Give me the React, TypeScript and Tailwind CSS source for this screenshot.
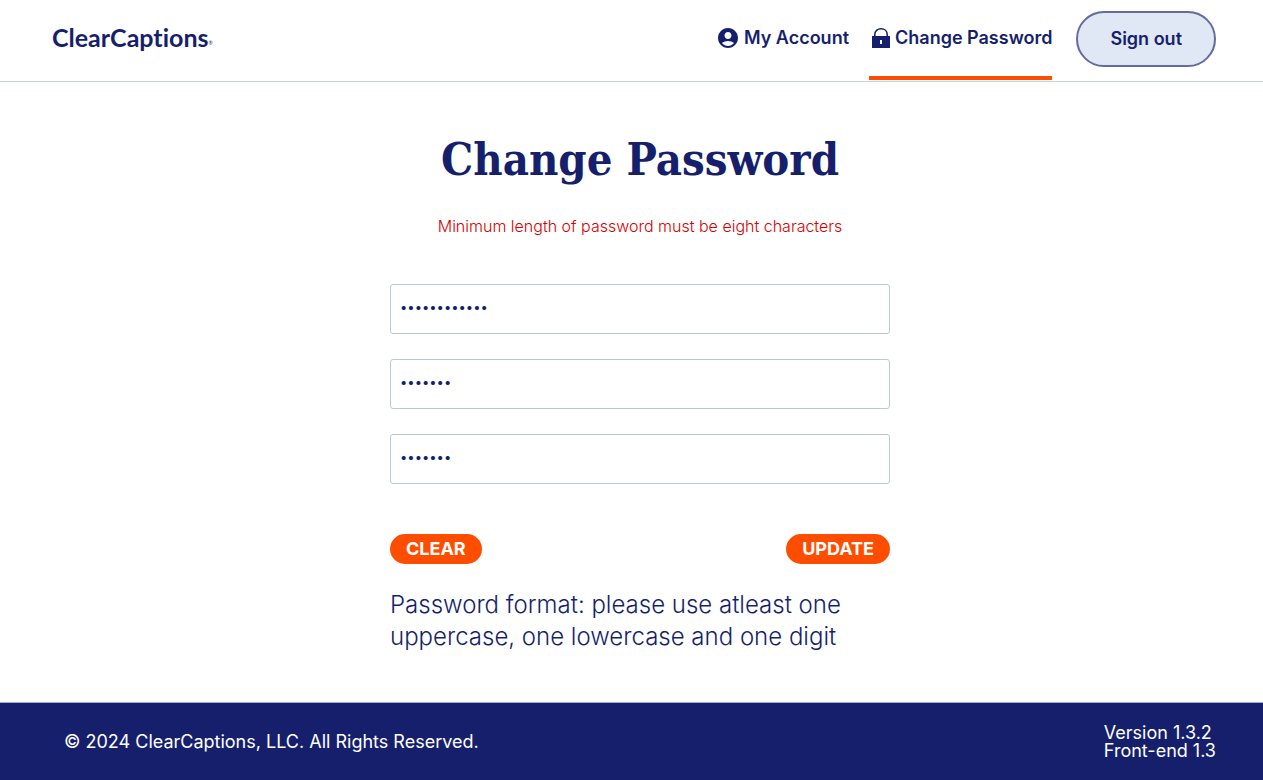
import { useState } from "react";
import { MdAccountCircle } from "react-icons/md";

function LockIcon() {
  return (
    <svg viewBox="0 0 18 20" className="h-5 w-[18px]" fill="none" aria-hidden="true">
      <path d="M2.8 9V6.5C2.8 3 5.5 .8 9 .8s6.200 2.200 6.200 5.700V9" stroke="currentColor" strokeWidth="1.500" />
      <path fill="currentColor" fillRule="evenodd" d="M0 8h18v12H0zM8 12v4h2v-4z" />
    </svg>
  );
}

function PasswordField({ label, initial }: { label: string; initial: string }) {
  const [value, setValue] = useState(initial);
  return (
    <input
      type="password"
      aria-label={label}
      value={value}
      onChange={(e) => setValue(e.target.value)}
      className="h-[50px] w-full rounded-[3px] border border-[#b9c6e6] bg-white px-[9px] pb-1 text-[13px] text-[#161f6c] outline-none"
    />
  );
}

const pill =
  "h-[30px] cursor-pointer rounded-full bg-[#ff4d00] px-4 text-lg leading-[30px] font-bold text-white";

export default function App() {
  return (
    <div className="flex min-h-screen flex-col bg-white font-['Inter','Liberation_Sans',sans-serif] text-[#161f6c]">
      <header className="flex h-[82px] items-start justify-between border-b border-[#c9d3ea] pr-[47px] pl-[52px]">
        <a href="#home" className="flex h-[76px] items-center font-['Lato',sans-serif] text-[25px] font-bold [font-variant-ligatures:none]">
          ClearCaptions<span className="pt-3 text-[5px] font-normal">®</span>
        </a>
        <div className="flex">
          <nav className="flex gap-5 text-lg font-semibold">
            <a href="#account" className="flex h-20 items-center gap-1 border-b-4 border-transparent">
              <MdAccountCircle className="size-6" />
              My Account
            </a>
            <a href="#password" aria-current="page" className="flex h-20 items-center gap-[5px] border-b-4 border-[#ff4d00] pl-[3px]">
              <LockIcon />
              Change Password
            </a>
          </nav>
          <button type="button" className="mt-[11px] ml-6 h-14 cursor-pointer rounded-full border-2 border-[#656b9b] bg-[#e0e7f5] px-8 text-lg font-semibold">
            Sign out
          </button>
        </div>
      </header>

      <main className="flex flex-1 flex-col items-center pt-12 pl-[17px]">
        <h1 className="font-['DejaVu_Serif_Condensed','DejaVu_Serif',serif] text-[45px] leading-[60px] font-bold">
          Change Password
        </h1>
        <p role="alert" className="mt-6 text-base leading-6 font-light text-[#d80000]">
          Minimum length of password must be eight characters
        </p>
        <form className="mt-[46px] flex w-full max-w-[500px] flex-col gap-[25px]" onSubmit={(e) => e.preventDefault()}>
          <PasswordField label="Current password" initial="Password1234" />
          <PasswordField label="New password" initial="Passwd1" />
          <PasswordField label="Confirm new password" initial="Passwd1" />
          <div className="mt-[25px] flex justify-between">
            <button type="reset" className={pill}>CLEAR</button>
            <button type="submit" className={pill}>UPDATE</button>
          </div>
          <p className="text-2xl leading-8 font-light">
            Password format: please use atleast one uppercase, one lowercase and one digit
          </p>
        </form>
      </main>

      <footer className="flex h-[78px] items-center justify-between border-t border-[#a3a9c8] bg-[#161f6c] pr-[47px] pl-16 text-lg leading-[18px] text-white">
        <p>© 2024 ClearCaptions, LLC. All Rights Reserved.</p>
        <p>
          Version 1.3.2
          <br />
          Front-end 1.3
        </p>
      </footer>
    </div>
  );
}
